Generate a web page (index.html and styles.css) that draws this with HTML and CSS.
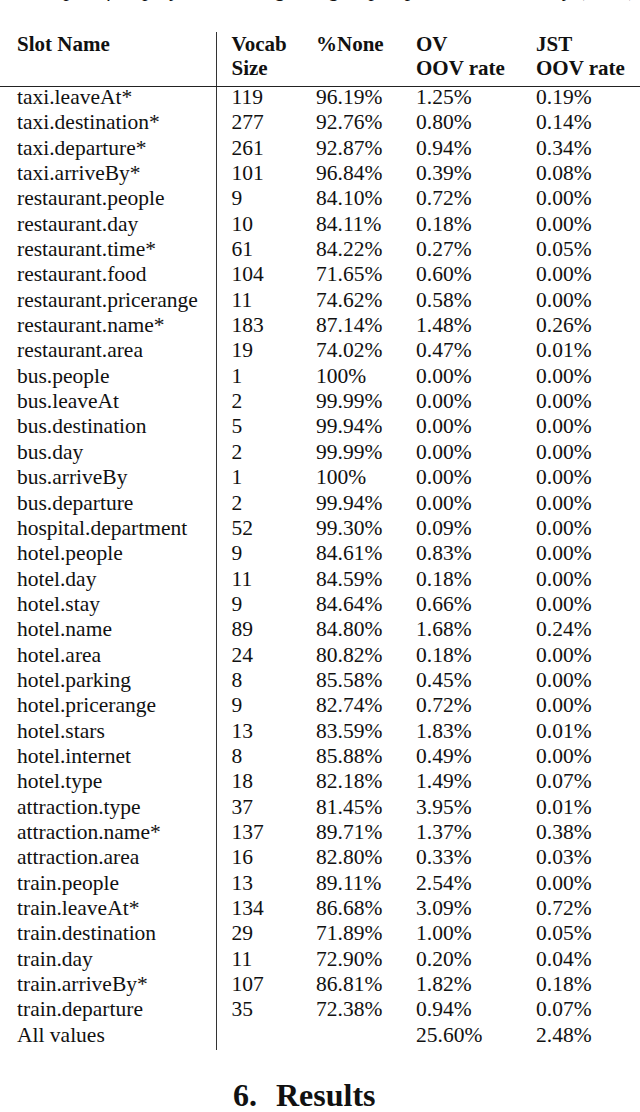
FILE: index.html
```html
<!DOCTYPE html>
<html lang="en">
<head>
    <meta charset="UTF-8">
    <title>Slot vocabulary</title>
    <link rel="stylesheet" href="styles.css">
</head>
<body>
<p class="caption">Example of display the training and grouped per slot vocabulary (OOV) appear</p>

<table class="slots">
    <colgroup>
        <col class="c-name">
        <col class="c-vocab">
        <col class="c-none">
        <col class="c-ov">
        <col class="c-jst">
    </colgroup>
    <thead>
    <tr>
        <th class="name">Slot Name</th>
        <th>Vocab<br>Size</th>
        <th>%None</th>
        <th>OV<br>OOV rate</th>
        <th>JST<br>OOV rate</th>
    </tr>
    </thead>
    <tbody>
    <tr><td class="name">taxi.leaveAt*</td><td>119</td><td>96.19%</td><td>1.25%</td><td>0.19%</td></tr>
    <tr><td class="name">taxi.destination*</td><td>277</td><td>92.76%</td><td>0.80%</td><td>0.14%</td></tr>
    <tr><td class="name">taxi.departure*</td><td>261</td><td>92.87%</td><td>0.94%</td><td>0.34%</td></tr>
    <tr><td class="name">taxi.arriveBy*</td><td>101</td><td>96.84%</td><td>0.39%</td><td>0.08%</td></tr>
    <tr><td class="name">restaurant.people</td><td>9</td><td>84.10%</td><td>0.72%</td><td>0.00%</td></tr>
    <tr><td class="name">restaurant.day</td><td>10</td><td>84.11%</td><td>0.18%</td><td>0.00%</td></tr>
    <tr><td class="name">restaurant.time*</td><td>61</td><td>84.22%</td><td>0.27%</td><td>0.05%</td></tr>
    <tr><td class="name">restaurant.food</td><td>104</td><td>71.65%</td><td>0.60%</td><td>0.00%</td></tr>
    <tr><td class="name">restaurant.pricerange</td><td>11</td><td>74.62%</td><td>0.58%</td><td>0.00%</td></tr>
    <tr><td class="name">restaurant.name*</td><td>183</td><td>87.14%</td><td>1.48%</td><td>0.26%</td></tr>
    <tr><td class="name">restaurant.area</td><td>19</td><td>74.02%</td><td>0.47%</td><td>0.01%</td></tr>
    <tr><td class="name">bus.people</td><td>1</td><td>100%</td><td>0.00%</td><td>0.00%</td></tr>
    <tr><td class="name">bus.leaveAt</td><td>2</td><td>99.99%</td><td>0.00%</td><td>0.00%</td></tr>
    <tr><td class="name">bus.destination</td><td>5</td><td>99.94%</td><td>0.00%</td><td>0.00%</td></tr>
    <tr><td class="name">bus.day</td><td>2</td><td>99.99%</td><td>0.00%</td><td>0.00%</td></tr>
    <tr><td class="name">bus.arriveBy</td><td>1</td><td>100%</td><td>0.00%</td><td>0.00%</td></tr>
    <tr><td class="name">bus.departure</td><td>2</td><td>99.94%</td><td>0.00%</td><td>0.00%</td></tr>
    <tr><td class="name">hospital.department</td><td>52</td><td>99.30%</td><td>0.09%</td><td>0.00%</td></tr>
    <tr><td class="name">hotel.people</td><td>9</td><td>84.61%</td><td>0.83%</td><td>0.00%</td></tr>
    <tr><td class="name">hotel.day</td><td>11</td><td>84.59%</td><td>0.18%</td><td>0.00%</td></tr>
    <tr><td class="name">hotel.stay</td><td>9</td><td>84.64%</td><td>0.66%</td><td>0.00%</td></tr>
    <tr><td class="name">hotel.name</td><td>89</td><td>84.80%</td><td>1.68%</td><td>0.24%</td></tr>
    <tr><td class="name">hotel.area</td><td>24</td><td>80.82%</td><td>0.18%</td><td>0.00%</td></tr>
    <tr><td class="name">hotel.parking</td><td>8</td><td>85.58%</td><td>0.45%</td><td>0.00%</td></tr>
    <tr><td class="name">hotel.pricerange</td><td>9</td><td>82.74%</td><td>0.72%</td><td>0.00%</td></tr>
    <tr><td class="name">hotel.stars</td><td>13</td><td>83.59%</td><td>1.83%</td><td>0.01%</td></tr>
    <tr><td class="name">hotel.internet</td><td>8</td><td>85.88%</td><td>0.49%</td><td>0.00%</td></tr>
    <tr><td class="name">hotel.type</td><td>18</td><td>82.18%</td><td>1.49%</td><td>0.07%</td></tr>
    <tr><td class="name">attraction.type</td><td>37</td><td>81.45%</td><td>3.95%</td><td>0.01%</td></tr>
    <tr><td class="name">attraction.name*</td><td>137</td><td>89.71%</td><td>1.37%</td><td>0.38%</td></tr>
    <tr><td class="name">attraction.area</td><td>16</td><td>82.80%</td><td>0.33%</td><td>0.03%</td></tr>
    <tr><td class="name">train.people</td><td>13</td><td>89.11%</td><td>2.54%</td><td>0.00%</td></tr>
    <tr><td class="name">train.leaveAt*</td><td>134</td><td>86.68%</td><td>3.09%</td><td>0.72%</td></tr>
    <tr><td class="name">train.destination</td><td>29</td><td>71.89%</td><td>1.00%</td><td>0.05%</td></tr>
    <tr><td class="name">train.day</td><td>11</td><td>72.90%</td><td>0.20%</td><td>0.04%</td></tr>
    <tr><td class="name">train.arriveBy*</td><td>107</td><td>86.81%</td><td>1.82%</td><td>0.18%</td></tr>
    <tr><td class="name">train.departure</td><td>35</td><td>72.38%</td><td>0.94%</td><td>0.07%</td></tr>
    <tr><td class="name">All values</td><td></td><td></td><td>25.60%</td><td>2.48%</td></tr>
    </tbody>
</table>

<h2 class="section"><span class="num">6.</span>Results</h2>
</body>
</html>
```

FILE: styles.css
```css
body {
    margin: 0;
    background: #fff;
    color: #111;
    font-family: "Liberation Serif", "Times New Roman", serif;
    overflow: hidden;
}

.caption {
    margin: -24.5px 0 0 0;
    padding-left: 16px;
    font-size: 21.5px;
    line-height: 26px;
    font-style: italic;
    white-space: nowrap;
    overflow: hidden;
}

.slots {
    margin-top: 30.5px;
    width: 640px;
    border-collapse: collapse;
    table-layout: fixed;
    font-size: 21.5px;
}

/* column widths include the cell padding */
.c-name { width: 216px; }
.c-vocab { width: 85px; }
.c-none { width: 100px; }
.c-ov { width: 120px; }
.c-jst { width: 119px; }

.slots th {
    text-align: left;
    font-weight: bold;
    font-size: 21px;
    vertical-align: top;
    line-height: 24px;
    padding: 0 0 6px 0;
    border-bottom: 1.5px solid #222;
    white-space: nowrap;
}

.slots td {
    line-height: 20.35px;
    padding: 0 0 5px 0;
    white-space: nowrap;
}

.slots .name {
    padding-left: 17px;
    border-right: 1.5px solid #333;
}

.slots th:not(.name),
.slots td:not(.name) {
    padding-left: 15px;
}

.section {
    margin: 30px 0 0 0;
    padding-left: 233px;
    font-size: 32px;
    font-weight: bold;
    line-height: 30px;
}

.section .num {
    margin-right: 19px;
}
```
